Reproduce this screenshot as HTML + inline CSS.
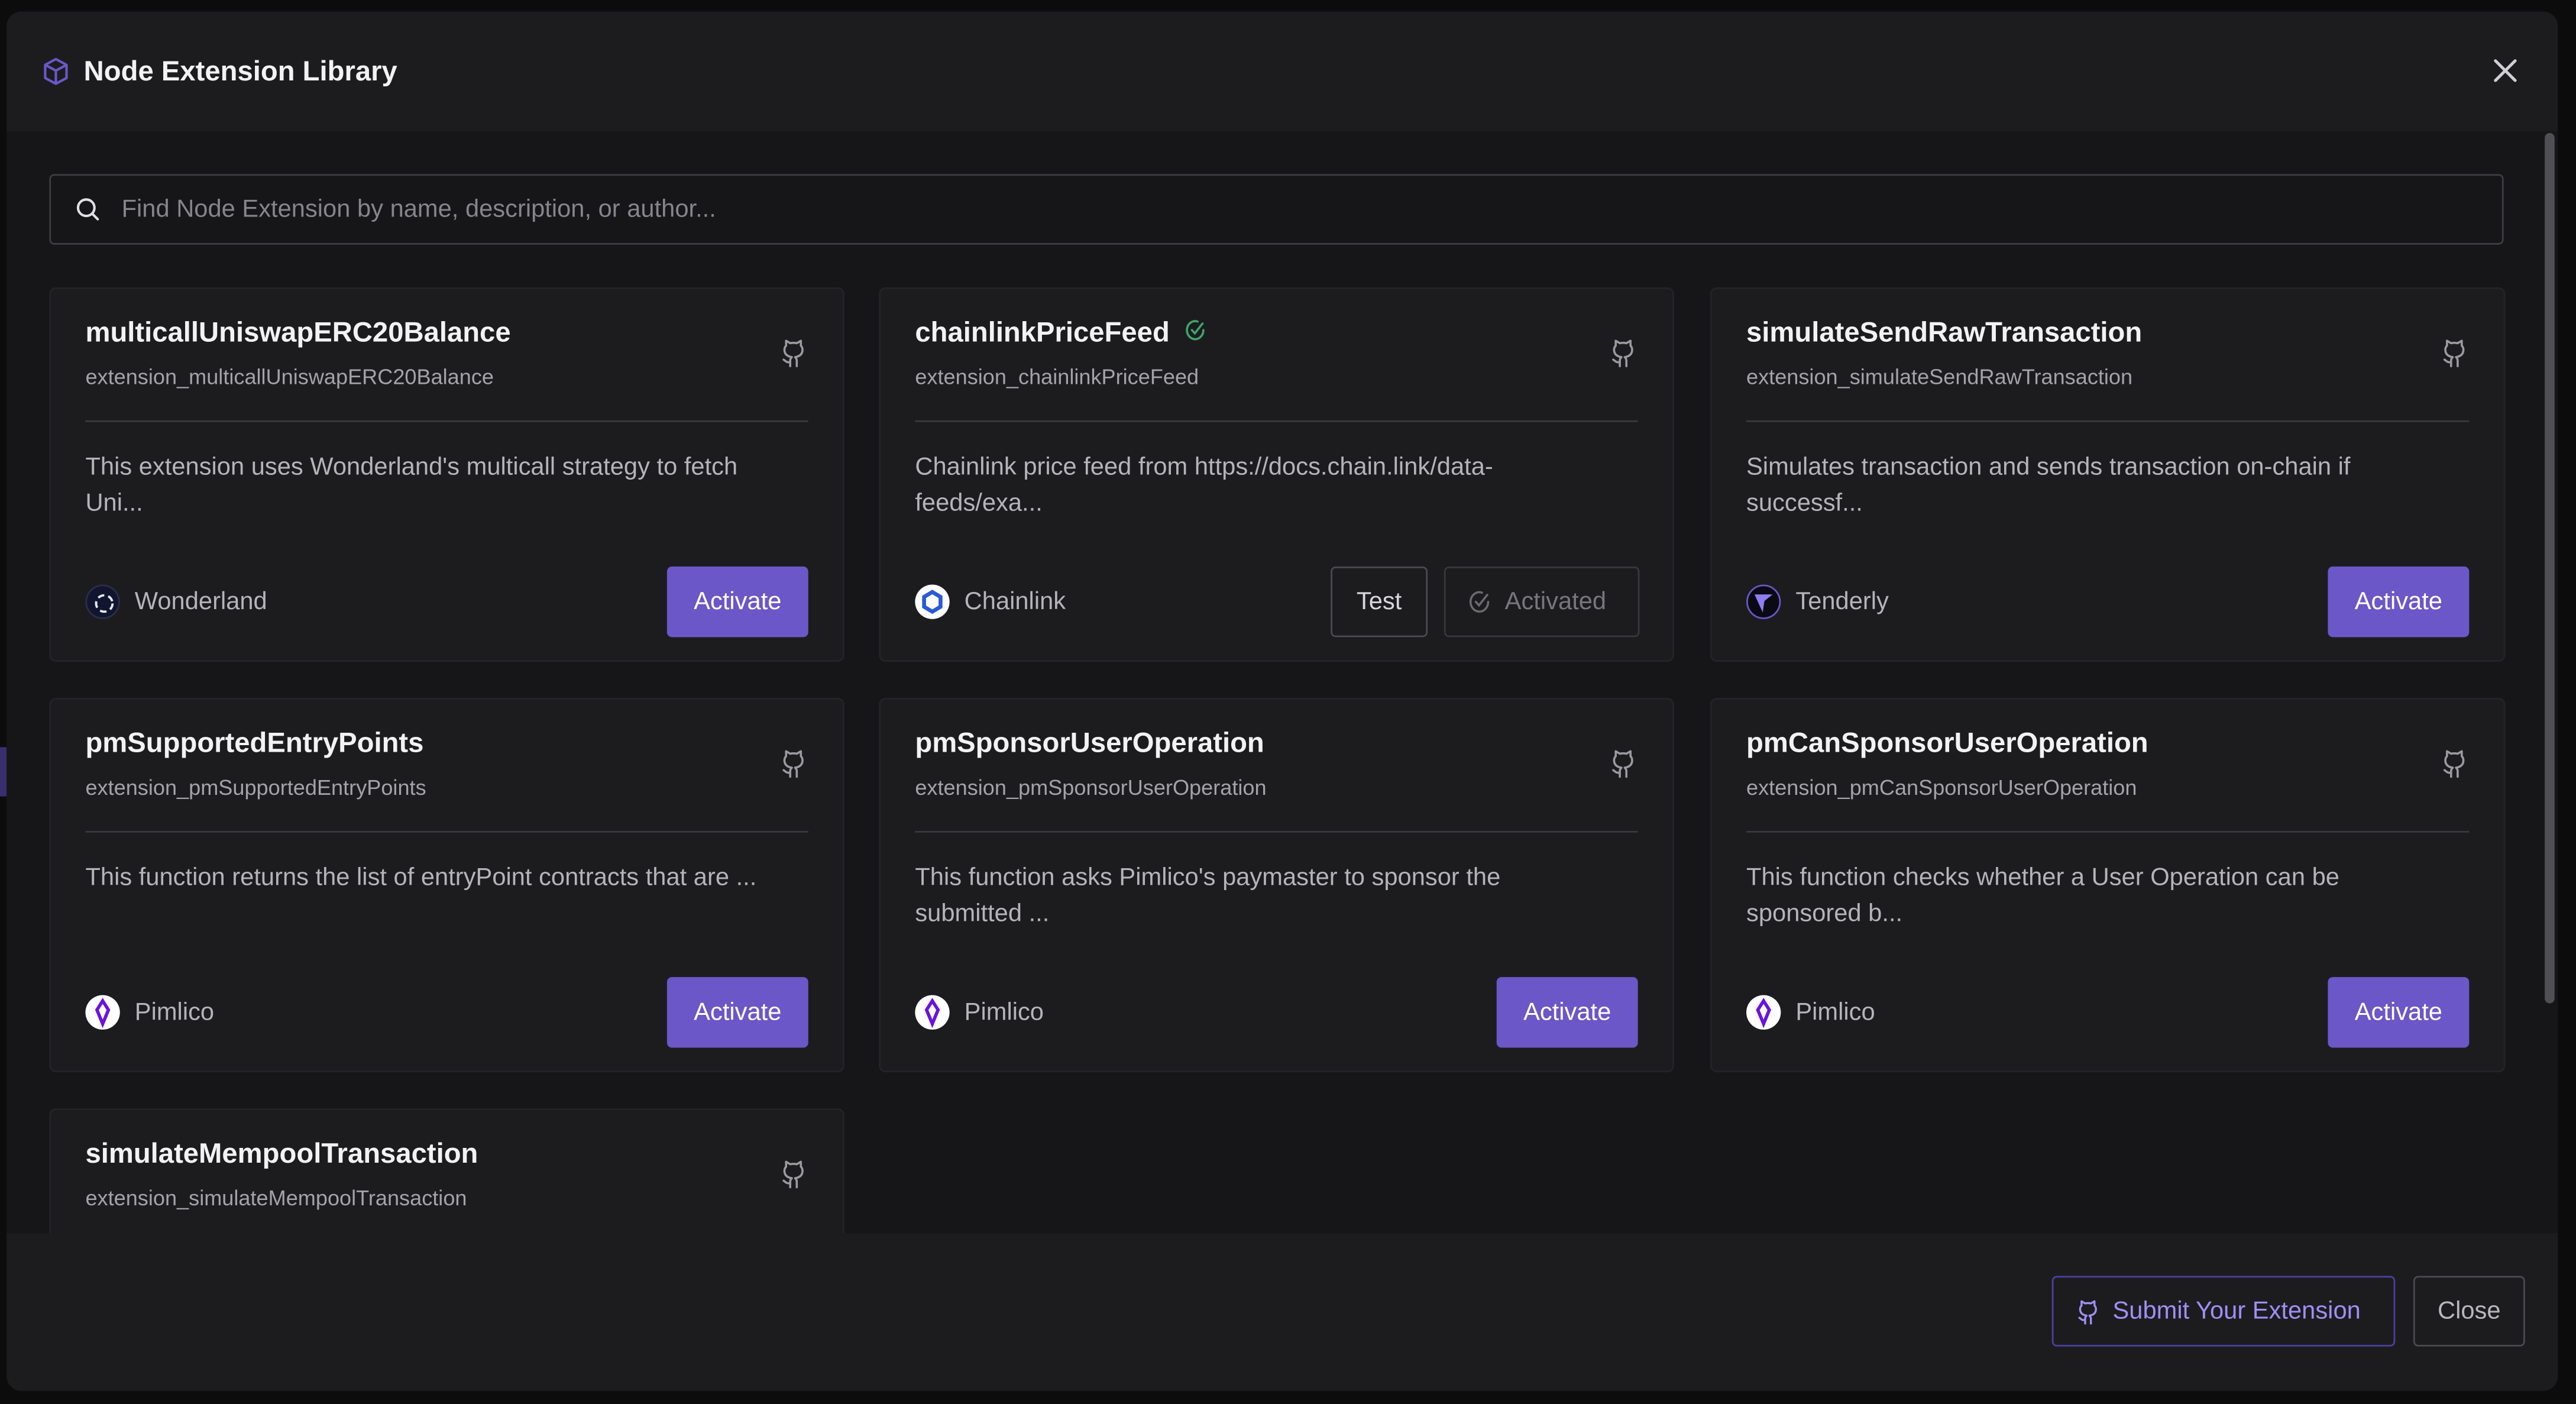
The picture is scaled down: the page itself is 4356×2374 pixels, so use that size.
<!DOCTYPE html>
<html><head><meta charset="utf-8"><style>
*{box-sizing:border-box;margin:0;padding:0}
html,body{width:4356px;height:2374px;overflow:hidden;background:#0c0c0d;font-family:"Liberation Sans",sans-serif}
#w{position:absolute;left:0;top:0;width:1568px;height:855px;transform:scale(2.778,2.7766);transform-origin:0 0}
.abs{position:absolute}
.modal{left:4px;top:6.5px;width:1553px;height:840px;background:#161618;border-radius:9px;overflow:hidden}
.hdr{left:0;top:0;width:1553px;height:73.5px;background:#1c1c1f}
.card{position:absolute;width:484px;height:228px;background:#1c1c1f;border:1px solid #242428;border-radius:4px}
.t{position:absolute;left:21px;top:17px;font-size:17px;font-weight:bold;color:#f2f2f4}
.s{position:absolute;left:21px;top:46px;font-size:13px;color:#a3a3a8}
.hr{position:absolute;left:21px;top:80px;width:440px;height:1px;background:#3a3a3e}
.d{position:absolute;left:21px;top:98px;width:430px;font-size:15px;line-height:22px;color:#b4b4b9}
.gh{position:absolute;left:444px;top:30px}
.av{position:absolute;left:21px;top:180px;width:21px;height:21px;border-radius:50%}
.an{position:absolute;left:51px;top:182px;font-size:15px;color:#b4b4b9}
.btn{position:absolute;left:375px;top:169px;width:86px;height:43px;background:#6b57c7;border-radius:3px;color:#fff;font-size:15px;text-align:center;line-height:43px}
</style></head><body><div id="w">
<div class="abs" style="left:0;top:455px;width:4px;height:30px;background:#3a2f6e"></div>
<div class="abs modal">
 <div class="abs hdr">
  <svg class="abs" style="left:22px;top:28px" width="16" height="17" viewBox="0 0 16 17" fill="none" stroke="#6b57c7" stroke-width="1.5" stroke-linejoin="round"><path d="M8 1L14.5 4.5V12.5L8 16L1.5 12.5V4.5Z M1.5 4.5L8 8L14.5 4.5 M8 8V16"/></svg>
  <div class="abs" style="left:47px;top:27px;font-size:17px;font-weight:bold;color:#f2f2f4">Node Extension Library</div>
  <svg class="abs" style="left:1513px;top:28.5px" width="16" height="16" viewBox="0 0 16 16" stroke="#d0d0d4" stroke-width="1.8" stroke-linecap="round"><path d="M2 2L14 14M14 2L2 14"/></svg>
 </div>
 <div class="abs" style="left:1545px;top:74px;width:6px;height:530px;background:#505054;border-radius:3px"></div>
 <div class="abs" style="left:26px;top:99.5px;width:1494px;height:43px;border:1px solid #3e3e42;border-radius:3px">
  <svg class="abs" style="left:15px;top:13px" width="15" height="15" viewBox="0 0 15 15" fill="none" stroke="#e0e0e4" stroke-width="1.5" stroke-linecap="round"><circle cx="6.5" cy="6.5" r="5"/><path d="M10.2 10.2L13.5 13.5"/></svg>
  <div class="abs" style="left:43px;top:12px;font-size:15px;color:#85858b">Find Node Extension by name, description, or author...</div>
 </div>
</div>

<div class="card" style="left:30px;top:175px"><div class="t">multicallUniswapERC20Balance</div><div class="s">extension_multicallUniswapERC20Balance</div>
<svg class="gh" width="16" height="18" viewBox="0 0 16 18" fill="none" stroke="#9a9aa0" stroke-width="1.3" stroke-linecap="round" stroke-linejoin="round"><path d="M6 17V13.5C6 12.5 6.5 12 7 11.5C4 11 2.5 9.5 2.5 7C2.5 6 3 5 3.5 4.5V1.5L6 3C7.3 2.7 8.7 2.7 10 3L12.5 1.5V4.5C13 5 13.5 6 13.5 7C13.5 9.5 12 11 9 11.5C9.5 12 10 12.5 10 13.5V17M6 14.5C3.5 15 3 13.5 2 13"/></svg>
<div class="hr"></div><div class="d">This extension uses Wonderland's multicall strategy to fetch Uni...</div>
<div class="av" style="background:#111530;border:1px solid #2a2e4a"><svg width="21" height="21" viewBox="0 0 21 21" fill="none" stroke="#e8e8f0" stroke-width="1.4"><circle cx="10.5" cy="10.5" r="5" stroke-dasharray="4 2.5"/></svg></div><div class="an">Wonderland</div><div class="btn">Activate</div></div>

<div class="card" style="left:535px;top:175px"><div class="t">chainlinkPriceFeed <svg style="vertical-align:0px;margin-left:4px" width="13" height="14" viewBox="0 0 13 14" fill="none" stroke="#3fa56a" stroke-width="1.3" stroke-linecap="round"><path d="M11.5 7A5 5.5 0 1 1 8 1.8M4.5 7L6.3 9L11 3"/></svg></div><div class="s">extension_chainlinkPriceFeed</div>
<svg class="gh" width="16" height="18" viewBox="0 0 16 18" fill="none" stroke="#9a9aa0" stroke-width="1.3" stroke-linecap="round" stroke-linejoin="round"><path d="M6 17V13.5C6 12.5 6.5 12 7 11.5C4 11 2.5 9.5 2.5 7C2.5 6 3 5 3.5 4.5V1.5L6 3C7.3 2.7 8.7 2.7 10 3L12.5 1.5V4.5C13 5 13.5 6 13.5 7C13.5 9.5 12 11 9 11.5C9.5 12 10 12.5 10 13.5V17M6 14.5C3.5 15 3 13.5 2 13"/></svg>
<div class="hr"></div><div class="d">Chainlink price feed from https://docs.chain.link/data-<br>feeds/exa...</div>
<div class="av" style="background:#fff"><svg width="21" height="21" viewBox="0 0 21 21"><path d="M10.5 4.5L15.5 7.5V13.5L10.5 16.5L5.5 13.5V7.5Z" fill="none" stroke="#2a5ad7" stroke-width="2.4"/></svg></div><div class="an">Chainlink</div>
<div class="abs" style="left:274px;top:169px;width:59px;height:43px;border:1px solid #4a4a4f;border-radius:3px;color:#d8d8dc;font-size:15px;text-align:center;line-height:41px">Test</div>
<div class="abs" style="left:343px;top:169px;width:119px;height:43px;border:1px solid #38383c;border-radius:3px;color:#77777c;font-size:15px;line-height:41px;padding-left:36px">Activated</div>
<svg class="abs" style="left:357px;top:183px" width="15" height="15" viewBox="0 0 13 14" fill="none" stroke="#6a6a70" stroke-width="1.2" stroke-linecap="round"><path d="M11.5 7A5 5.5 0 1 1 8 1.8M4.5 7L6.3 9L11 3"/></svg>
</div>

<div class="card" style="left:1041px;top:175px"><div class="t">simulateSendRawTransaction</div><div class="s">extension_simulateSendRawTransaction</div>
<svg class="gh" width="16" height="18" viewBox="0 0 16 18" fill="none" stroke="#9a9aa0" stroke-width="1.3" stroke-linecap="round" stroke-linejoin="round"><path d="M6 17V13.5C6 12.5 6.5 12 7 11.5C4 11 2.5 9.5 2.5 7C2.5 6 3 5 3.5 4.5V1.5L6 3C7.3 2.7 8.7 2.7 10 3L12.5 1.5V4.5C13 5 13.5 6 13.5 7C13.5 9.5 12 11 9 11.5C9.5 12 10 12.5 10 13.5V17M6 14.5C3.5 15 3 13.5 2 13"/></svg>
<div class="hr"></div><div class="d">Simulates transaction and sends transaction on-chain if successf...</div>
<div class="av" style="background:#0a0a14;border:1px solid #6b57c7"><svg width="19" height="19" viewBox="0 0 19 19"><path d="M4 5L15 5L10 9L9 16Z" fill="#8f7cf0"/></svg></div><div class="an">Tenderly</div><div class="btn">Activate</div></div>

<div class="card" style="left:30px;top:425px"><div class="t">pmSupportedEntryPoints</div><div class="s">extension_pmSupportedEntryPoints</div>
<svg class="gh" width="16" height="18" viewBox="0 0 16 18" fill="none" stroke="#9a9aa0" stroke-width="1.3" stroke-linecap="round" stroke-linejoin="round"><path d="M6 17V13.5C6 12.5 6.5 12 7 11.5C4 11 2.5 9.5 2.5 7C2.5 6 3 5 3.5 4.5V1.5L6 3C7.3 2.7 8.7 2.7 10 3L12.5 1.5V4.5C13 5 13.5 6 13.5 7C13.5 9.5 12 11 9 11.5C9.5 12 10 12.5 10 13.5V17M6 14.5C3.5 15 3 13.5 2 13"/></svg>
<div class="hr"></div><div class="d">This function returns the list of entryPoint contracts that are ...</div>
<div class="av" style="background:#fff"><svg width="21" height="21" viewBox="0 0 21 21"><path d="M10.5 3.5L14 9L10.5 17.5L7 9Z" fill="none" stroke="#6a12e0" stroke-width="2"/></svg></div><div class="an">Pimlico</div><div class="btn">Activate</div></div>

<div class="card" style="left:535px;top:425px"><div class="t">pmSponsorUserOperation</div><div class="s">extension_pmSponsorUserOperation</div>
<svg class="gh" width="16" height="18" viewBox="0 0 16 18" fill="none" stroke="#9a9aa0" stroke-width="1.3" stroke-linecap="round" stroke-linejoin="round"><path d="M6 17V13.5C6 12.5 6.5 12 7 11.5C4 11 2.5 9.5 2.5 7C2.5 6 3 5 3.5 4.5V1.5L6 3C7.3 2.7 8.7 2.7 10 3L12.5 1.5V4.5C13 5 13.5 6 13.5 7C13.5 9.5 12 11 9 11.5C9.5 12 10 12.5 10 13.5V17M6 14.5C3.5 15 3 13.5 2 13"/></svg>
<div class="hr"></div><div class="d">This function asks Pimlico's paymaster to sponsor the<br>submitted ...</div>
<div class="av" style="background:#fff"><svg width="21" height="21" viewBox="0 0 21 21"><path d="M10.5 3.5L14 9L10.5 17.5L7 9Z" fill="none" stroke="#6a12e0" stroke-width="2"/></svg></div><div class="an">Pimlico</div><div class="btn">Activate</div></div>

<div class="card" style="left:1041px;top:425px"><div class="t">pmCanSponsorUserOperation</div><div class="s">extension_pmCanSponsorUserOperation</div>
<svg class="gh" width="16" height="18" viewBox="0 0 16 18" fill="none" stroke="#9a9aa0" stroke-width="1.3" stroke-linecap="round" stroke-linejoin="round"><path d="M6 17V13.5C6 12.5 6.5 12 7 11.5C4 11 2.5 9.5 2.5 7C2.5 6 3 5 3.5 4.5V1.5L6 3C7.3 2.7 8.7 2.7 10 3L12.5 1.5V4.5C13 5 13.5 6 13.5 7C13.5 9.5 12 11 9 11.5C9.5 12 10 12.5 10 13.5V17M6 14.5C3.5 15 3 13.5 2 13"/></svg>
<div class="hr"></div><div class="d">This function checks whether a User Operation can be sponsored b...</div>
<div class="av" style="background:#fff"><svg width="21" height="21" viewBox="0 0 21 21"><path d="M10.5 3.5L14 9L10.5 17.5L7 9Z" fill="none" stroke="#6a12e0" stroke-width="2"/></svg></div><div class="an">Pimlico</div><div class="btn">Activate</div></div>

<div class="card" style="left:30px;top:675px;height:76px;border-bottom:none;border-radius:4px 4px 0 0"><div class="t">simulateMempoolTransaction</div><div class="s">extension_simulateMempoolTransaction</div>
<svg class="gh" width="16" height="18" viewBox="0 0 16 18" fill="none" stroke="#9a9aa0" stroke-width="1.3" stroke-linecap="round" stroke-linejoin="round"><path d="M6 17V13.5C6 12.5 6.5 12 7 11.5C4 11 2.5 9.5 2.5 7C2.5 6 3 5 3.5 4.5V1.5L6 3C7.3 2.7 8.7 2.7 10 3L12.5 1.5V4.5C13 5 13.5 6 13.5 7C13.5 9.5 12 11 9 11.5C9.5 12 10 12.5 10 13.5V17M6 14.5C3.5 15 3 13.5 2 13"/></svg></div>

<div class="abs" style="left:4px;top:751px;width:1553px;height:95.5px;background:#1c1c1f;border-radius:0 0 9px 9px"></div>
<div class="abs" style="left:1249px;top:777px;width:209px;height:43px;border:1px solid #4b3fa0;border-radius:3px;color:#a08ff5;font-size:15px;line-height:41px;padding-left:36px">Submit Your Extension</div>
<svg class="abs" style="left:1264px;top:791px" width="14" height="16" viewBox="0 0 16 18" fill="none" stroke="#a08ff5" stroke-width="1.4" stroke-linecap="round" stroke-linejoin="round"><path d="M6 17V13.5C6 12.5 6.5 12 7 11.5C4 11 2.5 9.5 2.5 7C2.5 6 3 5 3.5 4.5V1.5L6 3C7.3 2.7 8.7 2.7 10 3L12.5 1.5V4.5C13 5 13.5 6 13.5 7C13.5 9.5 12 11 9 11.5C9.5 12 10 12.5 10 13.5V17M6 14.5C3.5 15 3 13.5 2 13"/></svg>
<div class="abs" style="left:1469px;top:777px;width:68px;height:43px;border:1px solid #4a4a4f;border-radius:3px;color:#b8b8bc;font-size:15px;text-align:center;line-height:41px">Close</div>
</div></body></html>
